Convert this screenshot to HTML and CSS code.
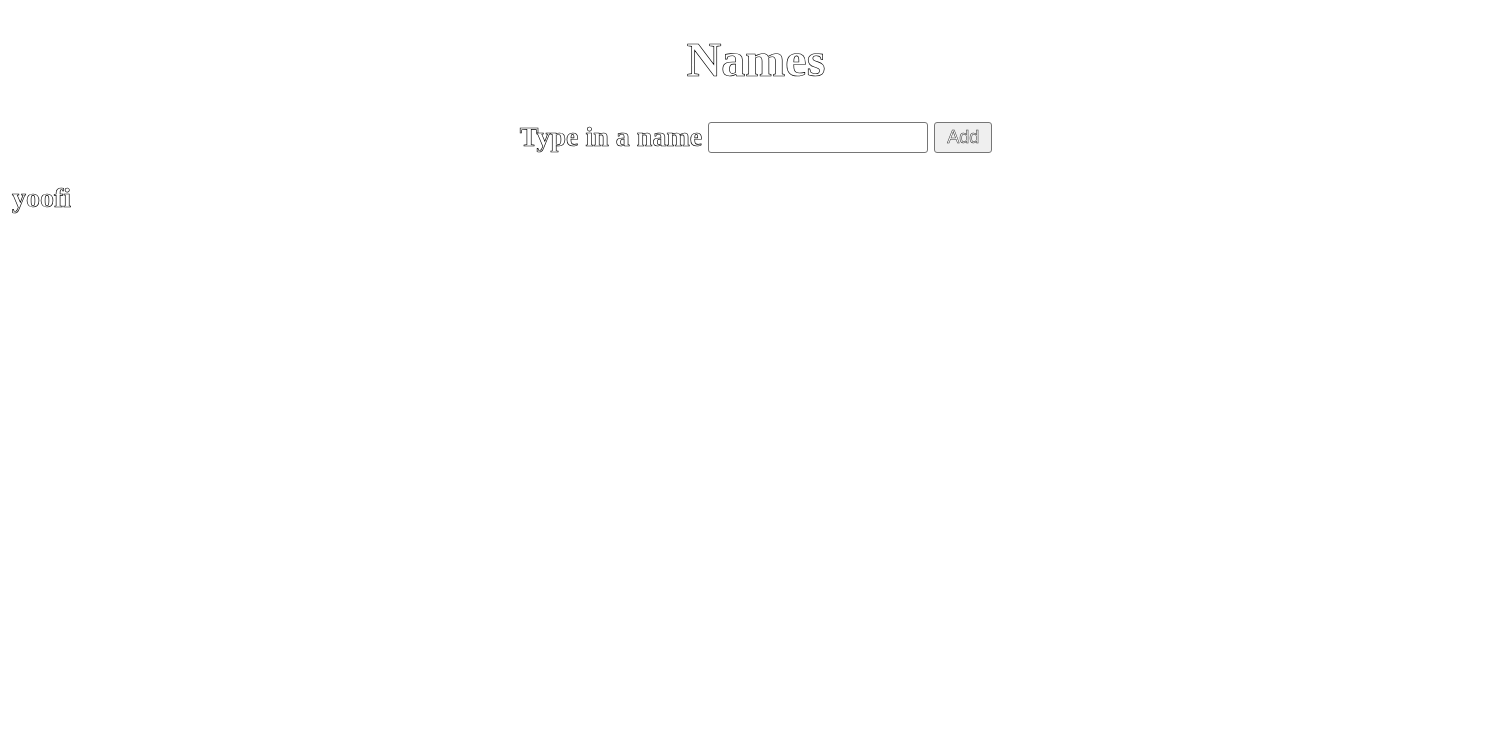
FILE: index.html
```html
<!DOCTYPE html>
<html>
<head>
<meta charset="utf-8">
<title>Names</title>
<link rel="stylesheet" href="styles.css">
</head>
<body>
<h1 class="title">Names</h1>
<form class="name-form">
  <label class="name-label" for="name">Type in a name</label>
  <input class="name-input" id="name" type="text">
  <button class="add-btn" type="button">Add</button>
</form>
<ul class="names">
  <li class="name-item">yoofi</li>
</ul>
</body>
</html>
```
FILE: styles.css
```css
html {
  background: #fff;
}
body {
  margin: 8px;
  font-family: "Liberation Serif", "Times New Roman", serif;
  color: #fff;
  -webkit-text-stroke: 0.65px #000;
  -webkit-font-smoothing: antialiased;
  filter: grayscale(100%);
}
.title {
  font-size: 48px;
  text-align: center;
  margin: 24px 0 34px;
}
.name-form {
  display: flex;
  justify-content: center;
  align-items: center;
  gap: 6px;
}
.name-label {
  font-size: 28px;
  font-weight: bold;
}
.name-input {
  width: 220px;
  height: 31px;
  box-sizing: border-box;
  border: 1px solid #767676;
  border-radius: 3px;
  -webkit-text-stroke: 0;
}
.add-btn {
  width: 58px;
  height: 31px;
  box-sizing: border-box;
  font-family: "Liberation Sans", Arial, sans-serif;
  font-size: 18px;
  color: #fff;
  -webkit-text-stroke: 0.55px #333;
  background: #efefef;
  border: 1px solid #767676;
  border-radius: 3px;
  padding: 0;
}
.names {
  list-style: none;
  padding: 0;
  margin: 29px 0 0 4px;
}
.name-item {
  font-size: 28px;
  font-weight: bold;
}
```
